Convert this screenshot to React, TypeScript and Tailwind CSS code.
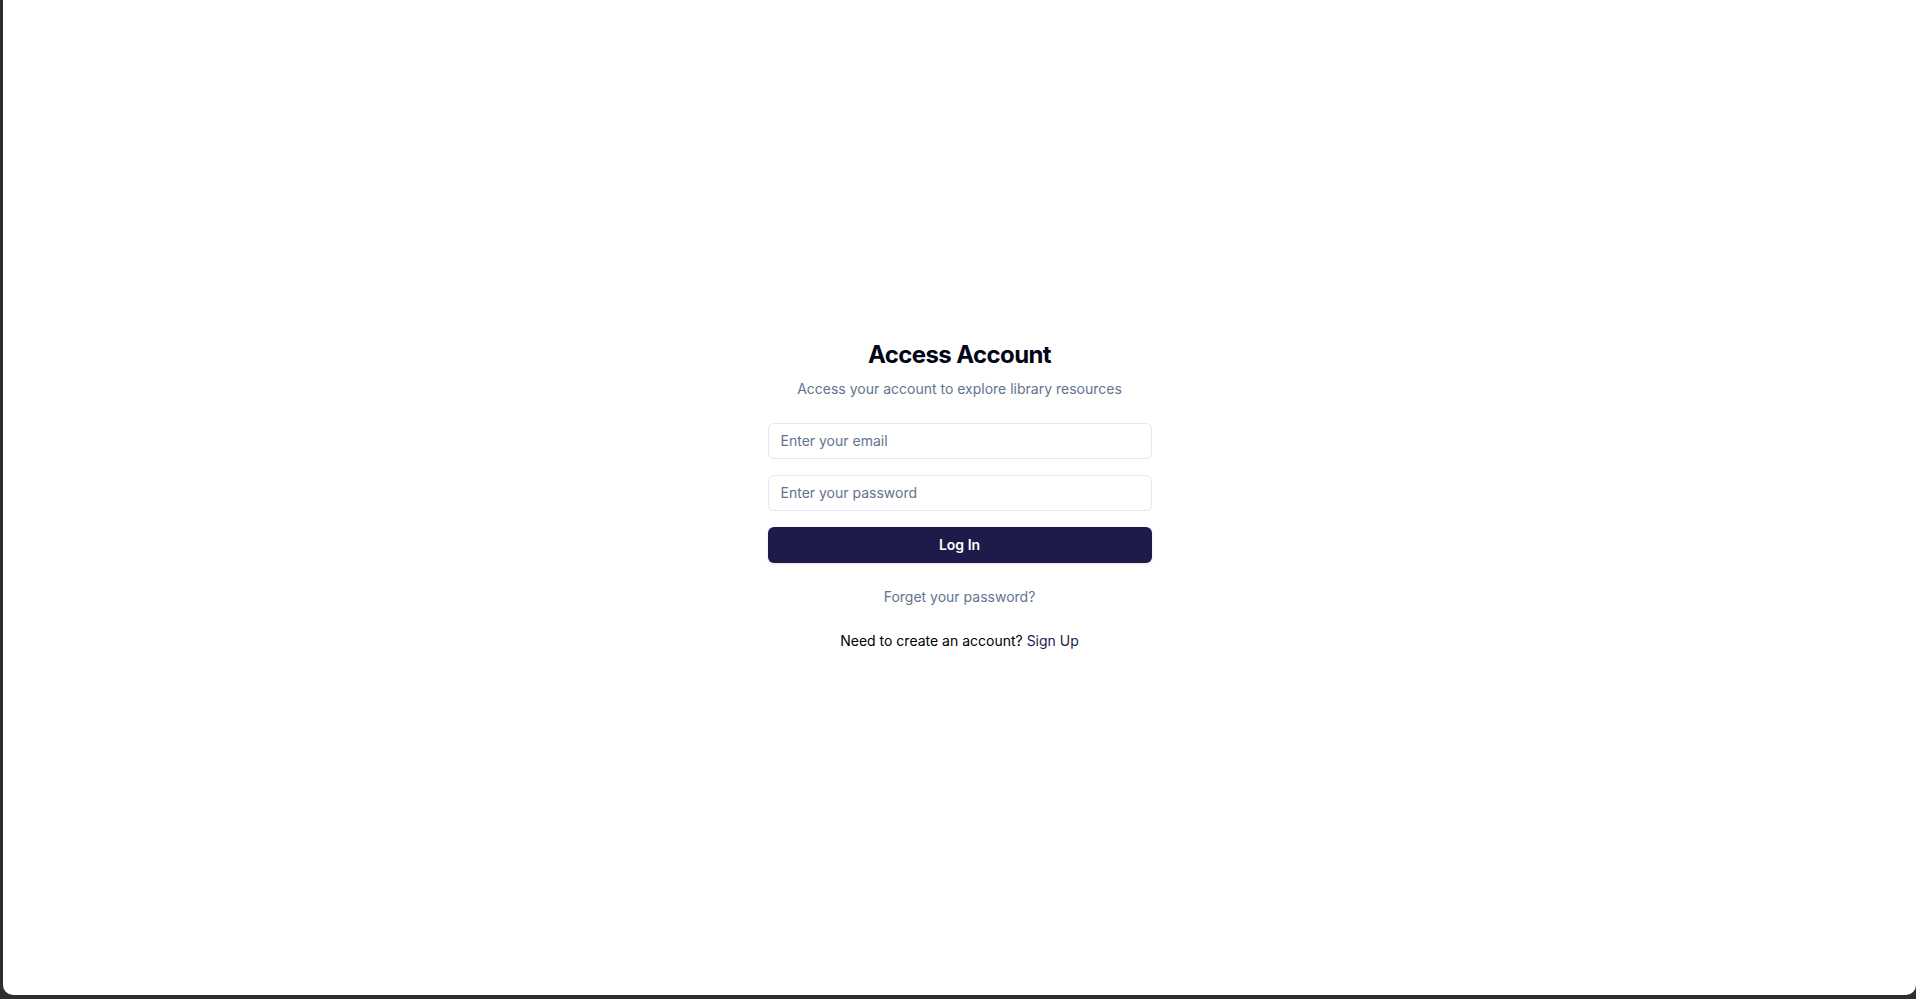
import React from "react";

export default function App() {
  return (
    <div className="h-screen bg-[#2e2e2e] pl-[3px] pb-[4px] font-['Inter',sans-serif]">
      <div className="flex h-full items-center justify-center rounded-b-[10px] bg-white pb-1.5">
        <div className="flex w-96 flex-col items-center">
          <h1 className="text-2xl font-bold tracking-tight text-slate-950">Access Account</h1>
          <p className="mt-2 text-sm text-slate-500">
            Access your account to explore library resources
          </p>
          <form className="mt-6 flex w-full flex-col gap-4">
            <input
              type="email"
              placeholder="Enter your email"
              className="h-9 w-full rounded-md border border-slate-200 px-3 text-sm outline-none placeholder:text-slate-500"
            />
            <input
              type="password"
              placeholder="Enter your password"
              className="h-9 w-full rounded-md border border-slate-200 px-3 text-sm outline-none placeholder:text-slate-500"
            />
            <button
              type="button"
              className="h-9 w-full rounded-md bg-[#1e1b4b] text-sm font-semibold text-white shadow-sm"
            >
              Log In
            </button>
          </form>
          <a className="mt-6 text-sm text-slate-500">Forget your password?</a>
          <p className="mt-6 text-sm text-black">
            Need to create an account? <a className="text-[#1e1b4b]">Sign Up</a>
          </p>
        </div>
      </div>
    </div>
  );
}
